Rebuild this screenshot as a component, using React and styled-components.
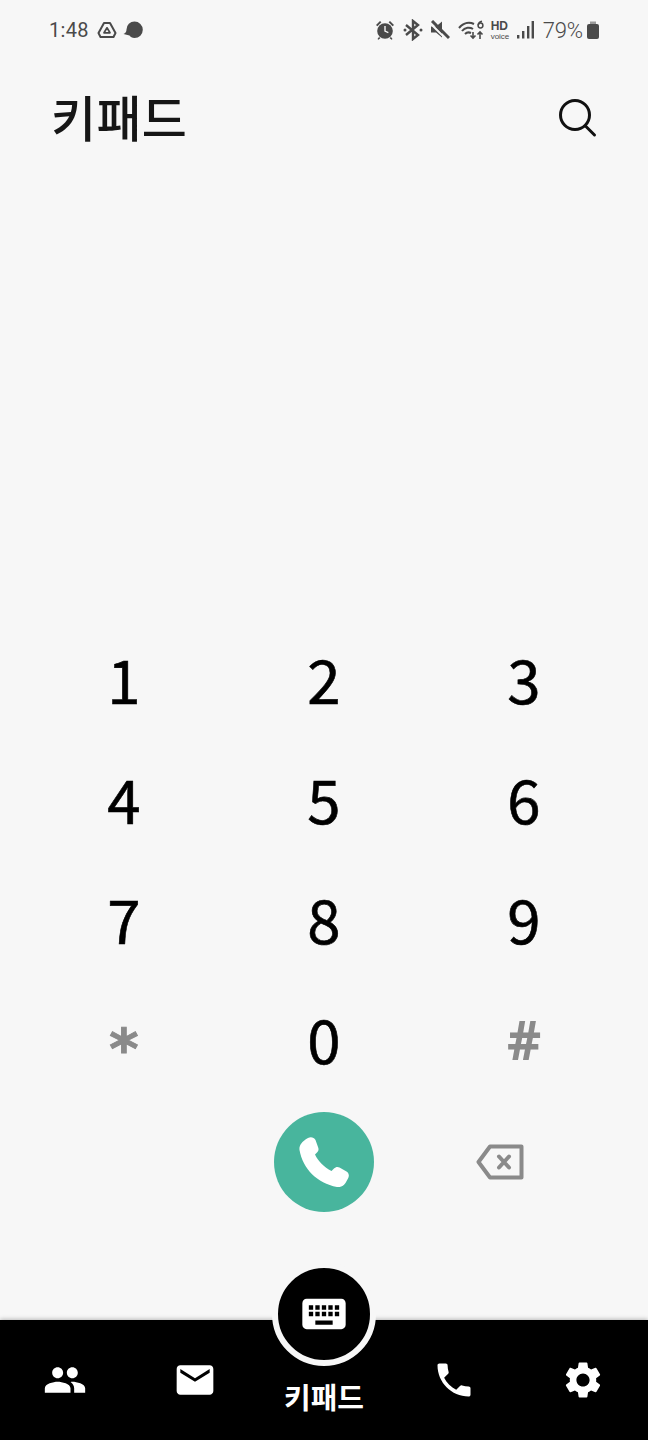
import React from "react";
import styled, { createGlobalStyle } from "styled-components";
import { MdPeople, MdEmail, MdPhone, MdSettings, MdKeyboard } from "react-icons/md";

const Global = createGlobalStyle`
  html, body { margin: 0; padding: 0; background: #f7f7f7; }
  * { box-sizing: border-box; }
`;
const KR = `"Noto Sans CJK KR", "Noto Sans", sans-serif`;

const Page = styled.div`
  width: 648px; height: 1440px; display: flex; flex-direction: column;
  background: #f7f7f7; overflow: hidden; font-family: ${KR};
`;
const StatusBar = styled.div`
  height: 60px; padding: 0 48px 0 49px; display: flex; align-items: center; justify-content: space-between;
  color: #4a4a4a; font-family: Roboto, sans-serif; font-size: 20px;
`;
const StatusGroup = styled.div`display: flex; align-items: center; gap: ${p => p.$gap ?? 6}px;`;
const Clock = styled.span`margin-right: 2px; letter-spacing: .3px;`;
const Battery = styled.span`font-size: 22px; letter-spacing: -.1px; font-weight: 300;`;
const HdBadge = styled.div`
  width: 21px; margin-right: 5px; display: flex; flex-direction: column; gap: 2px; font-family: "Liberation Sans", sans-serif;
  color: #4a4a4a;
`;
const HdText = styled.span`font-size: 12px; font-weight: 700; line-height: 10px; height: 10px;`;
const VoiceText = styled.span`font-size: 8px; line-height: 7px; height: 7px;`;
const Header = styled.header`
  height: 116px; padding: 0 50px 0 51px; display: flex; align-items: center; justify-content: space-between;
  margin-bottom: 442px;
`;
const Title = styled.h1`
  margin: 0 0 5px; font-family: ${KR}; font-weight: 500; font-size: 49px; line-height: 1; color: #161616; letter-spacing: .3px;
`;
const Keypad = styled.div`display: grid; grid-template-columns: repeat(3, 200px); grid-auto-rows: 120px; padding: 0 24px;`;
const Key = styled.div`
  display: flex; align-items: center; justify-content: center;
  font-size: 60px; line-height: 1; font-weight: 400; color: #000; -webkit-text-stroke: .6px #000;
`;
const StarKey = styled(Key)`
  font-family: "DejaVu Sans", sans-serif; font-size: 56px; font-weight: 700; color: #8a8a8a;
  -webkit-text-stroke: 1px #8a8a8a; padding-top: 22px;
`;
const HashKey = styled(Key)`
  font-family: "Noto Sans", sans-serif; font-size: 53px; font-weight: 700; color: #8a8a8a;
  -webkit-text-stroke: 0; padding-top: 2px;
`;
const ActionRow = styled.div`display: grid; grid-template-columns: repeat(3, 200px); padding: 0 24px; height: 100px; margin-top: 14px;`;
const ActionCell = styled.div`display: flex; align-items: center; justify-content: center;`;
const BackspaceCell = styled(ActionCell)`padding-right: 48px;`;
const CallButton = styled.div`
  width: 100px; height: 100px; border-radius: 50%; background: #48b59d; color: #fff;
  display: flex; align-items: center; justify-content: center;
`;
const Nav = styled.nav`
  position: relative; margin-top: auto; height: 120px; background: #000; box-shadow: 0 -1px 4px rgba(0,0,0,.25);
  display: grid; grid-template-columns: 130px 129px 130px 129px 130px; color: #fff;
`;
const NavItem = styled.div`display: flex; justify-content: center; padding-top: 38px;`;
const NavCenter = styled.div`display: flex; justify-content: center;`;
const Fab = styled.div`
  position: absolute; left: 272px; top: -58px; width: 104px; height: 104px; border-radius: 50%;
  background: #000; border: 6px solid #f7f7f7; display: flex; align-items: center; justify-content: center;
`;
const FabLabel = styled.div`
  padding-top: 58px; font-family: ${KR}; font-weight: 700; font-size: 29px; line-height: 36px; color: #fff; text-align: center;
`;

function StatusIcons() {
  return (
    <StatusGroup $gap={0}>
      <svg width="20" height="20" viewBox="0 0 20 20" fill="#4a4a4a" style={{ marginRight: 8 }}>
        <circle cx="10" cy="11" r="7.800" /><path d="M1 5l4-4 1.400 1.300-4 4zM19 5l-4-4-1.400 1.300 4 4zM4 17l-1.500 2 1 .8L5.500 18zM16 17l1.500 2-1 .8-2-1.800z" />
        <path d="M9.300 6v5.600l3.800 1.700.5-1.200-2.900-1.300V6z" fill="#f7f7f7" />
      </svg>
      <svg width="20" height="22" viewBox="0 0 20 22" fill="none" stroke="#4a4a4a" strokeWidth="2.400" style={{ marginRight: 7 }}>
        <path d="M3 6l12 10-5 4V2l5 4L3 16" />
        <circle cx="2" cy="11" r="1.500" fill="#4a4a4a" stroke="none" /><circle cx="18" cy="11" r="1.500" fill="#4a4a4a" stroke="none" />
      </svg>
      <svg width="20" height="20" viewBox="0 0 20 20" fill="#4a4a4a" style={{ marginRight: 8 }}>
        <path d="M1 6.500h5l6-5v16l-6-5H1z" /><path d="M0 3l17 17" stroke="#f7f7f7" strokeWidth="2" /><path d="M2 1l17 17" stroke="#4a4a4a" strokeWidth="3" />
      </svg>
      <svg width="27" height="20" viewBox="0 0 27 20" fill="none" stroke="#4a4a4a" strokeWidth="2" style={{ marginRight: 6 }}>
        <path d="M1 8c5-6 11-6 15-4M4 11c3-4 8-4 11-2M7 14c2-2 4-2 6-1" />
        <path d="M15 12v6m-2.500-2.500L15 18l2.500-2.500M22 19v-7m-2.500 2.500L22 12l2.500 2.500" strokeWidth="1.600" />
        <circle cx="22.500" cy="5.500" r="2.400" strokeWidth="1.500" /><path d="M24 1.200c-2 .4-3.600 2-3.800 4" strokeWidth="1.500" />
      </svg>
      <HdBadge><HdText>HD</HdText><VoiceText>voice</VoiceText></HdBadge>
      <svg width="17" height="20" viewBox="0 0 17 20" fill="#4a4a4a" style={{ marginRight: 9 }}>
        <rect x="0" y="15" width="2.400" height="3.500" /><rect x="5" y="11" width="2.400" height="7.500" /><rect x="10" y="6" width="2.400" height="12.500" /><rect x="14.600" y="1" width="2.400" height="17.500" />
      </svg>
      <Battery>79%</Battery>
      <svg width="14" height="20" viewBox="0 0 14 20" fill="#4a4a4a" style={{ marginLeft: 3 }}>
        <path d="M4 1.500h6V4h-6z" fill="#9a9a9a" /><rect x="1" y="4" width="12" height="15" rx="2" />
      </svg>
    </StatusGroup>
  );
}

const keys = ["1","2","3","4","5","6","7","8","9"];

export default function App() {
  return (
    <Page>
      <Global />
      <StatusBar>
        <StatusGroup>
          <Clock>1:48</Clock>
          <svg width="20" height="18" viewBox="0 0 20 18" fill="none" stroke="#4a4a4a" strokeWidth="2" strokeLinejoin="round">
            <path d="M7 2h6l5.500 10-2 4H3.500l-2-4z" /><path d="M10 6.800l3 5H7z" strokeWidth="1.700" />
          </svg>
          <svg width="20" height="18" viewBox="0 0 20 18" fill="#4a4a4a">
            <path d="M11.500 0.500a8.300 8.300 0 1 1 0 16.600c-2.500 0-4-1-5-2.500L.500 13c2-1 3-2.500 3-4.500a8 8 0 0 1 8-8z" />
          </svg>
        </StatusGroup>
        <StatusIcons />
      </StatusBar>
      <Header>
        <Title>키패드</Title>
        <svg width="40" height="40" viewBox="0 0 40 40" fill="none" stroke="#111" strokeWidth="3">
          <circle cx="17" cy="17" r="14.500" /><path d="M27.500 28l9 9" strokeLinecap="round" />
        </svg>
      </Header>
      <Keypad>
        {keys.map(k => <Key key={k}>{k}</Key>)}
        <StarKey>*</StarKey>
        <Key>0</Key>
        <HashKey>#</HashKey>
      </Keypad>
      <ActionRow>
        <ActionCell />
        <ActionCell>
          <CallButton>
            <svg width="50" height="50" viewBox="0 0 50 50" fill="#fff">
              <path d="M9 1C12-.5 15 .5 16.500 3L19 10C20 12.500 19.500 14 18 15.500L16 17.500C19 24 25 30 32.500 34L35 31.500C36.500 30 38.500 29.500 40.500 30.500L47.500 34.500C50 36 50.500 39 49 41.500L46.500 46C44.500 49 41.500 50.500 38 50C18 46 4 32 .5 13C0 9 2 5 9 1Z" />
            </svg>
          </CallButton>
        </ActionCell>
        <BackspaceCell>
          <svg width="48" height="36" viewBox="0 0 48 36" fill="none" stroke="#8a8a8a" strokeWidth="4" strokeLinejoin="round" strokeLinecap="round">
            <path d="M2.500 18L14 2.500H45.500V33.500H14Z" />
            <path d="M23 12.500L33 23.500M33 12.500L23 23.500" />
          </svg>
        </BackspaceCell>
      </ActionRow>
      <Nav>
        <NavItem><MdPeople size={44} /></NavItem>
        <NavItem><MdEmail size={44} /></NavItem>
        <NavCenter><FabLabel>키패드</FabLabel></NavCenter>
        <NavItem><MdPhone size={44} /></NavItem>
        <NavItem><MdSettings size={44} /></NavItem>
        <Fab><MdKeyboard size={52} /></Fab>
      </Nav>
    </Page>
  );
}
